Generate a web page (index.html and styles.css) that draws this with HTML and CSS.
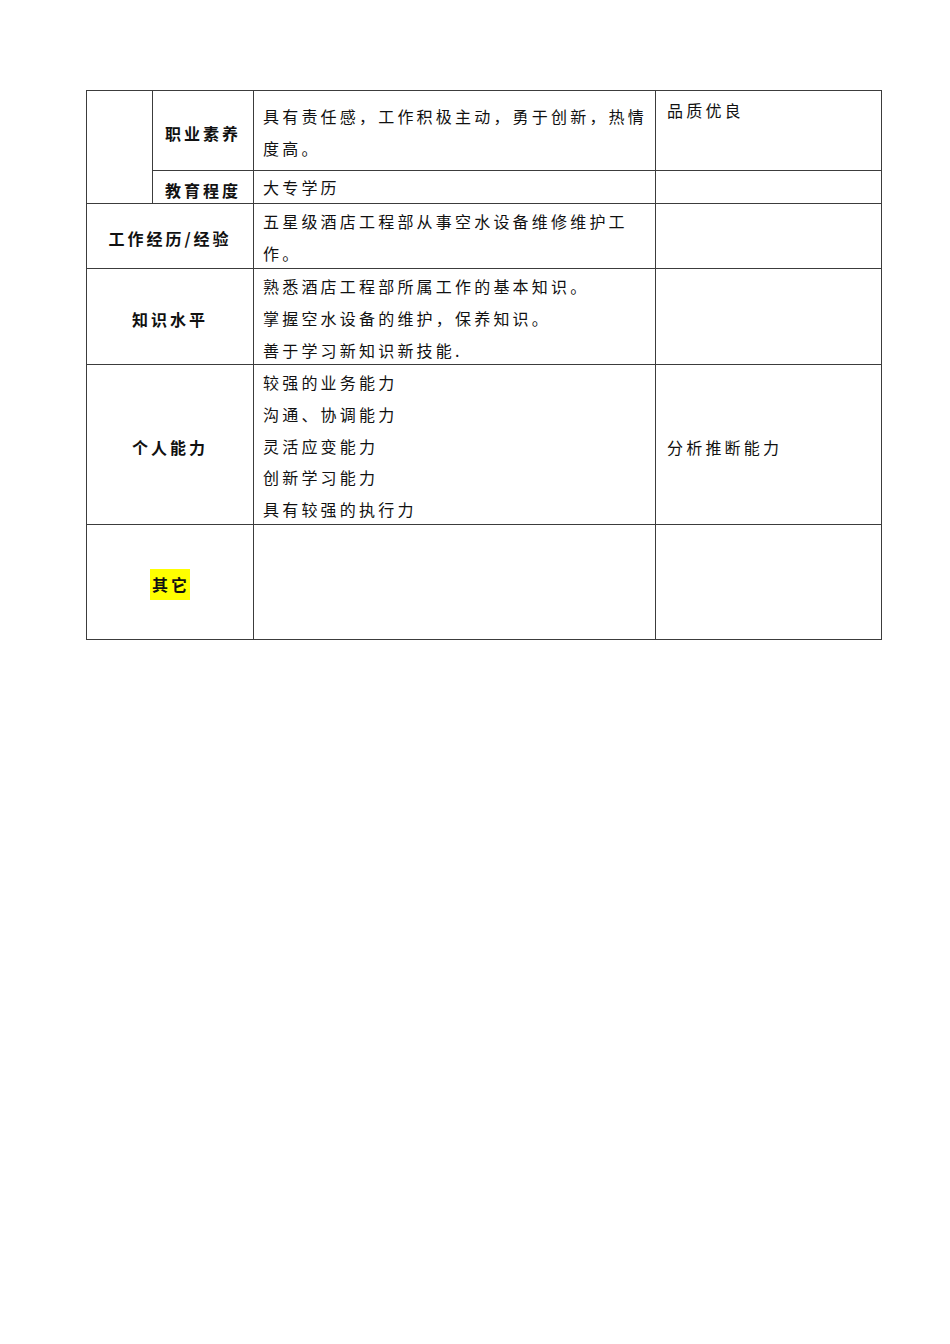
FILE: index.html
```html
<!DOCTYPE html>
<html lang="zh-CN">
<head>
<meta charset="utf-8">
<title>岗位说明</title>
<link rel="stylesheet" href="styles.css">
</head>
<body>
<div class="page">
  <div class="sheet">
    <div class="cell blank-merge"></div>
    <div class="cell label r1">职业素养</div>
    <div class="cell text r1-text">具有责任感，工作积极主动，勇于创新，热情<br>度高。</div>
    <div class="cell side r1-side">品质优良</div>

    <div class="cell label r2">教育程度</div>
    <div class="cell text r2-text">大专学历</div>
    <div class="cell side"></div>

    <div class="cell label wide">工作经历/经验</div>
    <div class="cell text">五星级酒店工程部从事空水设备维修维护工<br>作。</div>
    <div class="cell side"></div>

    <div class="cell label wide">知识水平</div>
    <div class="cell text">熟悉酒店工程部所属工作的基本知识。<br>掌握空水设备的维护，保养知识。<br>善于学习新知识新技能.</div>
    <div class="cell side"></div>

    <div class="cell label wide">个人能力</div>
    <div class="cell text">较强的业务能力<br>沟通、协调能力<br>灵活应变能力<br>创新学习能力<br>具有较强的执行力</div>
    <div class="cell side mid">分析推断能力</div>

    <div class="cell label wide"><span class="mark">其它</span></div>
    <div class="cell text"></div>
    <div class="cell side"></div>
  </div>
</div>
</body>
</html>
```
FILE: styles.css
```css
html, body {
  margin: 0;
  padding: 0;
  background: #ffffff;
}

.page {
  width: 950px;
  height: 1344px;
  padding: 90px 0 0 86px;
  box-sizing: border-box;
  font-family: "Noto Sans CJK SC", "Noto Sans", sans-serif;
  font-size: 16px;
  color: #111111;
}

.sheet {
  display: grid;
  grid-template-columns: 66px 101px 402px 226px;
  grid-template-rows: 80px 33px 65px 96px 160px 115px;
  width: 796px;
  box-sizing: border-box;
  border-top: 1px solid #3c3c3c;
  border-left: 1px solid #3c3c3c;
}

.cell {
  border-right: 1px solid #3c3c3c;
  border-bottom: 1px solid #3c3c3c;
  min-width: 0;
  letter-spacing: 3px;
}

.blank-merge {
  grid-column: 1;
  grid-row: 1 / span 2;
}

.label {
  display: flex;
  align-items: center;
  justify-content: center;
  font-weight: 700;
  padding-top: 4px;
  line-height: 24px;
}

.label.r2 {
  padding-top: 6px;
}

.wide {
  grid-column: 1 / span 2;
}

.text {
  padding: 2px 0 0 9px;
  line-height: 31.75px;
  font-weight: 400;
  letter-spacing: 3.2px;
}

.r1-text {
  padding-top: 10px;
}

.r2-text {
  padding-top: 1px;
}

.side {
  padding: 3px 0 0 11px;
  line-height: 32px;
  letter-spacing: 3.2px;
}

.side.mid {
  display: flex;
  align-items: center;
  padding-top: 4px;
}

.mark {
  display: inline-block;
  background: #ffff00;
  padding-left: 2px;
  line-height: 31px;
}
```
